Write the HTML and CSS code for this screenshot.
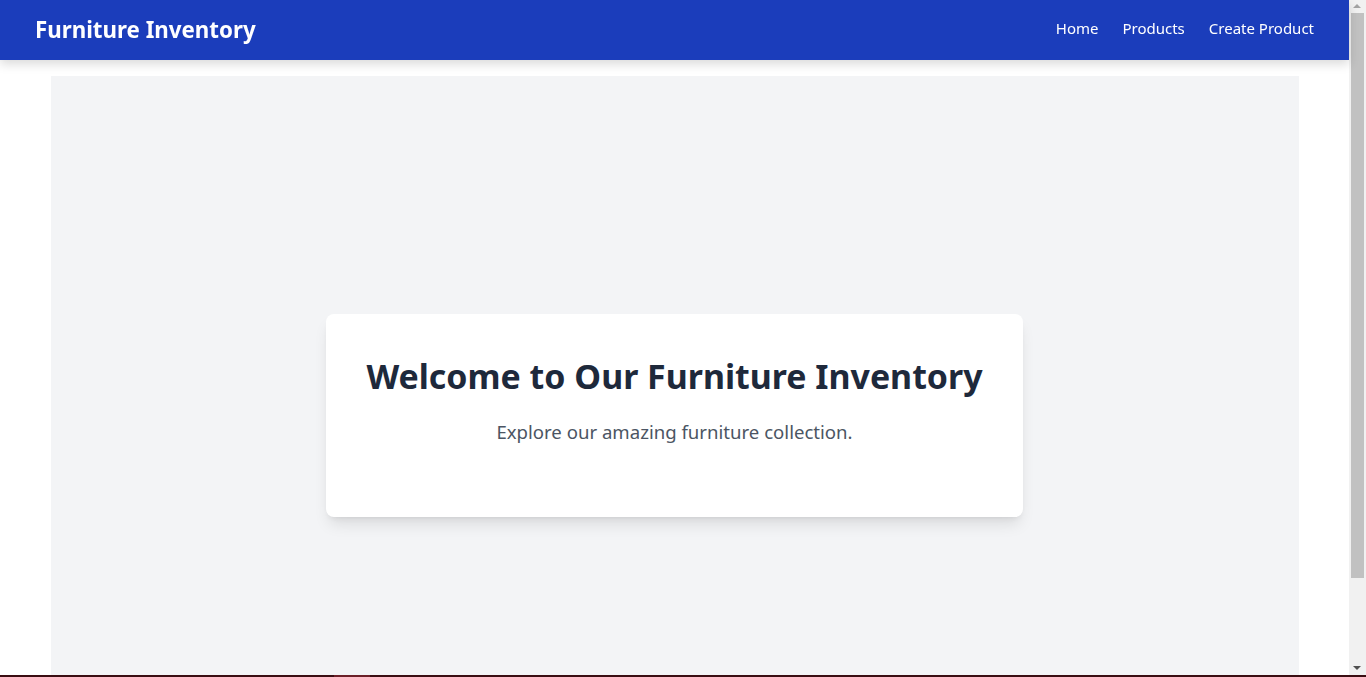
FILE: index.html
```html
<!DOCTYPE html>
<html lang="en">
<head>
<meta charset="utf-8">
<title>Furniture Inventory</title>
<link rel="stylesheet" href="styles.css">
</head>
<body>
<div class="page">
  <nav class="navbar">
    <div class="brand">Furniture Inventory</div>
    <ul class="nav-links">
      <li><a href="#">Home</a></li>
      <li><a href="#">Products</a></li>
      <li><a href="#">Create Product</a></li>
    </ul>
  </nav>
  <div class="container">
    <main class="panel">
      <section class="card">
        <h1 class="title">Welcome to Our Furniture Inventory</h1>
        <p class="subtitle">Explore our amazing furniture collection.</p>
      </section>
    </main>
  </div>
</div>
<div class="scrollbar" aria-hidden="true">
  <span class="arrow arrow-up"></span>
  <span class="thumb"></span>
  <span class="arrow arrow-down"></span>
</div>
<div class="bottom-bar"><span class="bottom-accent"></span></div>
</body>
</html>
```
FILE: styles.css
```css
* { box-sizing: border-box; }
html, body { margin: 0; padding: 0; }
html { overflow: hidden; }
body {
  font-family: "Noto Sans", "Open Sans", sans-serif;
  background: #ffffff;
  color: #1f2937;
}
.page {
  margin-right: 17px;
}
.navbar {
  height: 60px;
  background: #1b3dbb;
  display: flex;
  align-items: center;
  justify-content: space-between;
  padding: 0 35px;
  box-shadow: 0 4px 10px rgba(0,0,0,0.15);
  position: relative;
  z-index: 1;
}
.brand {
  color: #fff;
  font-weight: 700;
  font-size: 22.3px;
  margin-top: -2px;
}
.nav-links {
  list-style: none;
  display: flex;
  gap: 24px;
  margin: 0;
  padding: 0;
  margin-top: -5px;
}
.nav-links a {
  color: #fff;
  text-decoration: none;
  font-size: 15px;
}
.container {
  max-width: 1280px;
  margin: 0 auto;
  padding: 16px;
}
.panel {
  background: #f3f4f6;
  min-height: 677px;
  display: flex;
  align-items: center;
  justify-content: center;
}
.card {
  background: #fff;
  border-radius: 8px;
  height: 203px;
  padding: 42px 40px 0;
  box-shadow: 0 10px 15px -3px rgba(0,0,0,0.1), 0 4px 6px -4px rgba(0,0,0,0.1);
  text-align: center;
  margin-top: 1px;
}
.title {
  margin: 0 0 22px;
  font-size: 33.9px;
  line-height: 40px;
  font-weight: 700;
  color: #1e293b;
}
.subtitle {
  margin: 0;
  font-size: 18.6px;
  line-height: 28px;
  color: #4b5563;
}
.scrollbar {
  position: fixed;
  top: 0;
  right: 0;
  width: 17px;
  height: 100vh;
  background: #f1f1f1;
}
.thumb {
  position: absolute;
  left: 2px;
  right: 2px;
  top: 13px;
  height: 565px;
  background: #c1c1c1;
}
.arrow {
  position: absolute;
  left: 4px;
  width: 0;
  height: 0;
  border-left: 4.5px solid transparent;
  border-right: 4.5px solid transparent;
}
.arrow-up {
  top: 4px;
  border-bottom: 4px solid #a3a3a3;
}
.arrow-down {
  bottom: 7px;
  border-top: 4px solid #505050;
}
.bottom-bar {
  position: fixed;
  left: 0;
  right: 0;
  bottom: 0;
  height: 2px;
  background: #3a0d12;
}
.bottom-accent {
  position: absolute;
  left: 334px;
  width: 36px;
  top: 0;
  height: 2px;
  background: #6b1f28;
}
```
